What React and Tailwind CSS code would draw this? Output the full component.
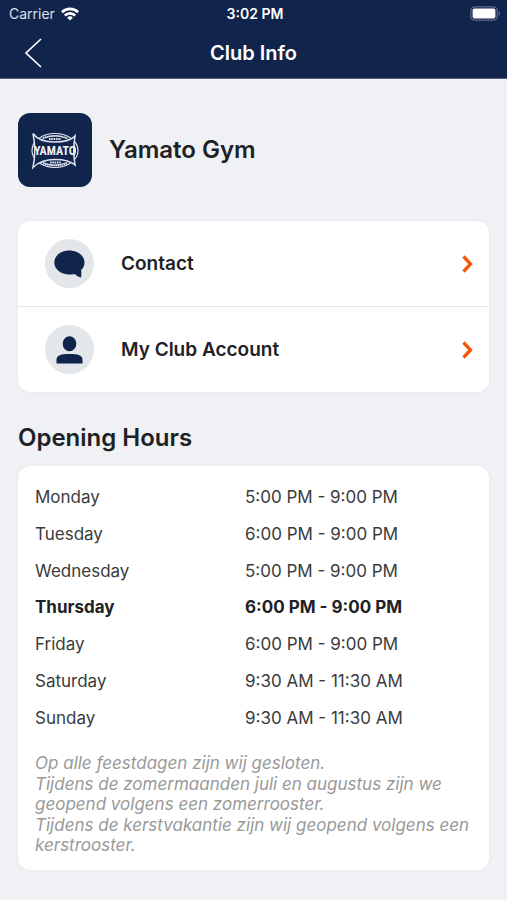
import React from "react";

const hours = [
  { day: "Monday", time: "5:00 PM - 9:00 PM" },
  { day: "Tuesday", time: "6:00 PM - 9:00 PM" },
  { day: "Wednesday", time: "5:00 PM - 9:00 PM" },
  { day: "Thursday", time: "6:00 PM - 9:00 PM", today: true },
  { day: "Friday", time: "6:00 PM - 9:00 PM" },
  { day: "Saturday", time: "9:30 AM - 11:30 AM" },
  { day: "Sunday", time: "9:30 AM - 11:30 AM" },
];

const notes = [
  "Op alle feestdagen zijn wij gesloten.",
  "Tijdens de zomermaanden juli en augustus zijn we geopend volgens een zomerrooster.",
  "Tijdens de kerstvakantie zijn wij geopend volgens een kerstrooster.",
];

function WifiIcon() {
  return (
    <svg className="h-[14px] w-[18px]" viewBox="0 0 18 14" fill="none" stroke="white" strokeWidth="2.6" aria-hidden="true">
      <path d="M0.9 5.2a11.6 11.6 0 0 1 16.2 0" />
      <path d="M3.8 8.5a7.4 7.4 0 0 1 10.4 0" />
      <path d="M9 13.6 6.1 10.7a4.1 4.1 0 0 1 5.8 0Z" fill="white" stroke="none" />
    </svg>
  );
}

function BatteryIcon() {
  return (
    <svg className="h-[15px] w-[31px]" viewBox="0 0 31 15" aria-label="Battery full" role="img">
      <rect x="0.8" y="0.8" width="26.4" height="13.4" rx="4" fill="none" stroke="#5f6b8c" strokeWidth="1.2" />
      <rect x="2.6" y="2.6" width="22.8" height="9.8" rx="2" fill="white" />
      <path d="M28.6 5.2c2 .8 2 3.8 0 4.6Z" fill="#5f6b8c" />
    </svg>
  );
}

function GymLogo() {
  return (
    <svg className="size-[74px] shrink-0 rounded-[12px] bg-[#10244c]" viewBox="0 0 74 74" fill="none" stroke="#dfe4ee" role="img" aria-label="Yamato Gym logo">
      <ellipse cx="37" cy="37.500" rx="23" ry="17" strokeWidth="1.2" />
      <ellipse cx="37" cy="37.500" rx="20.500" ry="14.500" strokeWidth="1" />
      <path d="M25 25Q37 20.500 49 25M25 50.500Q37 54.500 49 50.500" strokeWidth="1.600" strokeDasharray="1.500 .6" />
      <path d="M15 20.500q6 8.500 21.500 8.500T57 23q-2.500 15 0 29-6-5.500-20-5.500T15 54.500q3.500-17 0-34Z" fill="#10244c" strokeWidth="1.500" />
      <path d="M31 26h12M32 49.600h11" strokeWidth="2" strokeDasharray="1.600 .7" />
      <text
        x="37"
        y="42"
        textAnchor="middle"
        fill="#f1f3f8"
        stroke="none"
        className="font-['Roboto_Condensed','Open_Sans_Condensed','Roboto',sans-serif] text-[12px] font-bold"
      >
        YAMATO
      </text>
    </svg>
  );
}

function ChatIcon() {
  return (
    <svg className="h-[28px] w-[32px]" viewBox="0 0 32 28" fill="#10244c" aria-hidden="true">
      <path d="M15.300 0.500C23.700 0.500 30.500 5.800 30.500 12.400c0 3-1.200 5.600-3.300 7.700.2 2.600.3 5-.1 7.400-2.500-.5-4.500-1.600-6.400-3.600-1.700.4-3.500.5-5.400.5C6.900 24.400.3 19 .3 12.400S6.900.5 15.300.5Z" />
    </svg>
  );
}

function PersonIcon() {
  return (
    <svg className="h-[28px] w-[32px]" viewBox="0 0 32 28" fill="#10244c" aria-hidden="true">
      <ellipse cx="15.500" cy="7.800" rx="6.800" ry="7.500" />
      <path d="M2.500 27.500v-3.700C2.500 19.200 7 18 15.500 18s13 1.200 13 5.800v3.700Z" />
    </svg>
  );
}

function MenuRow({ icon, label }) {
  return (
    <button type="button" className="flex h-[85px] w-full items-center bg-white pr-[16px] pl-[27px] text-left">
      <span className="flex size-[49px] items-center justify-center rounded-full bg-[#e4e7ea]">{icon}</span>
      <span className="ml-[27px] flex-1 text-[19px] leading-6 font-semibold">{label}</span>
      <svg className="h-[18px] w-[11px]" viewBox="0 0 11 18" fill="none" stroke="#f4560b" strokeWidth="3.300" aria-hidden="true">
        <path d="M1.500 1.500 8.500 9l-7 7.500" />
      </svg>
    </button>
  );
}

export default function App() {
  return (
    <div className="min-h-screen bg-[#eff1f5] font-['Inter','Liberation_Sans',sans-serif] text-[#202124]">
      <header className="border-b border-[#51617f] bg-[#10244c] text-white">
        <div className="grid h-[27px] grid-cols-3 items-center pr-[6px] pl-[9px] text-[14px] leading-5">
          <div className="flex items-center gap-[6px] text-[#dce1ec]">
            <span>Carrier</span>
            <WifiIcon />
          </div>
          <div className="text-center font-semibold">3:02 PM</div>
          <div className="flex justify-end">
            <BatteryIcon />
          </div>
        </div>
        <div className="grid h-[51px] grid-cols-[64px_1fr_64px] items-center">
          <button type="button" aria-label="Back" className="pl-[24px]">
            <svg className="h-[30px] w-[18px]" viewBox="0 0 18 30" fill="none" stroke="white" strokeWidth="1.700" aria-hidden="true">
              <path d="M17 1 2 15l15 14" />
            </svg>
          </button>
          <h1 className="text-center text-[20px] leading-6 font-semibold">Club Info</h1>
        </div>
      </header>

      <main className="px-[18px] pt-[34px] pb-[29px]">
        <div className="flex items-center gap-[17px]">
          <GymLogo />
          <h2 className="text-[24px] leading-7 font-semibold">Yamato Gym</h2>
        </div>

        <nav aria-label="Club" className="mt-[34px] flex flex-col gap-px overflow-hidden rounded-[12px] bg-[#e4e6ea] shadow-[0_0_3px_rgba(0,0,0,0.06)]">
          <MenuRow icon={<ChatIcon />} label="Contact" />
          <MenuRow icon={<PersonIcon />} label="My Club Account" />
        </nav>

        <h2 className="mt-[32px] text-[24px] leading-7 font-semibold">Opening Hours</h2>

        <section className="mt-[14px] rounded-[12px] bg-white px-[17px] pt-[13px] pb-[15px] shadow-[0_0_3px_rgba(0,0,0,0.06)]">
          <table className="h-[257px] w-full text-left text-[17px] leading-5">
            <tbody>
              {hours.map(({ day, time, today }) => (
                <tr key={day} className={today ? "font-bold" : "font-normal text-[#3a3b3d]"}>
                  <th scope="row" className={today ? "w-[210px] p-0 font-bold" : "w-[210px] p-0 font-normal"}>{day}</th>
                  <td className="p-0">{time}</td>
                </tr>
              ))}
            </tbody>
          </table>
          <div className="mt-[17px] flex flex-col gap-px text-[17px] leading-5 text-[#999999] italic">
            {notes.map((note) => (
              <p key={note}>{note}</p>
            ))}
          </div>
        </section>
      </main>
    </div>
  );
}
